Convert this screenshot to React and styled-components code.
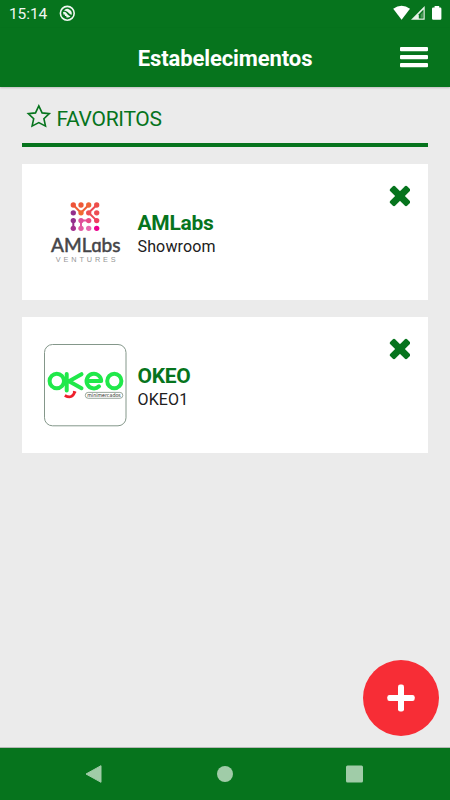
import React from "react";
import styled, { createGlobalStyle } from "styled-components";

const GREEN = "#06741d";

const GlobalStyle = createGlobalStyle`
  * { box-sizing: border-box; }
  body { margin: 0; font-family: Roboto, sans-serif; background: #ebebeb; overflow: hidden; }
`;
const Screen = styled.div`
  width: 450px;
  height: 800px;
  display: flex;
  flex-direction: column;
  position: relative;
  background: #ebebeb;
`;
const StatusBar = styled.div`
  height: 28px;
  flex: none;
  display: flex;
  align-items: center;
  padding: 0 8px 0 9px;
  background: ${GREEN};
  color: #f1f7f2;
`;
const Clock = styled.span`
  font-size: 15.5px;
  line-height: 28px;
  width: 50px;
  letter-spacing: -0.1px;
`;
const StatusIcons = styled.svg`
  margin-left: auto;
  display: block;
`;
const Icon = styled.svg`
  display: block;
  flex: none;
`;
const Header = styled.header`
  height: 59px;
  flex: none;
  display: grid;
  grid-template-columns: 50px 1fr 50px;
  align-items: center;
  background: ${GREEN};
  color: #fff;
  box-shadow: 0 1px 2px rgba(0, 0, 0, 0.2);
`;
const Title = styled.h1`
  grid-column: 2;
  margin: 2px 0 0;
  text-align: center;
  font-size: 22px;
  line-height: 28px;
  font-weight: 700;
  letter-spacing: -0.1px;
`;
const MenuButton = styled.button`
  border: 0;
  padding: 0 0 2px;
  background: none;
`;
const Content = styled.main`
  flex: 1;
  padding: 0 22px;
`;
const SectionHeading = styled.h2`
  margin: 0 0 16.5px;
  height: 60px;
  padding: 17px 0 0 4px;
  border-bottom: 4px solid ${GREEN};
  display: flex;
  gap: 4.5px;
  color: ${GREEN};
  font-size: 21px;
  line-height: 30px;
  font-weight: 400;
  letter-spacing: -0.3px;
`;
const Card = styled.article`
  height: 136.5px;
  margin-bottom: 16.5px;
  padding: 0 18px 0 22px;
  background: #fff;
  display: flex;
`;
const CardLogo = styled.div`
  width: 93.5px;
  padding-top: 27px;
`;
const CardText = styled.div`
  flex: 1;
  padding-top: 46px;
`;
const Name = styled.div`
  color: ${GREEN};
  font-size: 21px;
  line-height: 27px;
  font-weight: 700;
  letter-spacing: -0.3px;
`;
const Detail = styled.div`
  color: #202020;
  font-size: 16px;
  line-height: 20px;
  letter-spacing: 0.15px;
`;
const RemoveButton = styled.button`
  border: 0;
  padding: 21.5px 0 0;
  background: none;
  align-self: flex-start;
`;
const AddButton = styled.button`
  position: absolute;
  right: 11px;
  bottom: 64px;
  width: 76.5px;
  height: 76.5px;
  padding: 0;
  border: 0;
  border-radius: 50%;
  background: #f72d36;
  display: flex;
  align-items: center;
  justify-content: center;
`;
const NavBar = styled.nav`
  height: 53px;
  flex: none;
  border-top: 1px solid #b5b7b5;
  background: ${GREEN};
  display: grid;
  grid-template-columns: 17px 16px 18px;
  column-gap: 113px;
  align-items: center;
  padding-left: 85px;
`;
const HomeIcon = styled(Icon)`
  margin-left: 2px;
`;

const DOTS = [
  ["#ee5438", "#ee5a38", "#ee6638", "#ee4e4a"],
  ["#93308c", "#f06a30", "#ee4e54", "#ee4e54"],
  ["#93308c", "#de4f9a", "#e84a86", "#ee4060"],
  ["#a5308f", "#e35aa3", "#e868b0", "#ec008c"],
];
const dotX = [29.3, 37, 44.7, 52.7];
const dotY = [14, 21.8, 29.6, 37.3];

function AMLabsLogo() {
  return (
    <Icon width="84" height="84" viewBox="0 0 84 84">
      <g strokeWidth="2" fill="none">
        <path d="M29.3 14l7.7 7.8 7.7-7.8" stroke="#ef5f36" />
        <path d="M52.7 14l-8 7.8 8 7.8" stroke="#ee4a54" />
        <path d="M29.3 29.6v7.7" stroke="#9c308d" />
        <path d="M37 37.3v-7.7h7.7" stroke="#e355a0" />
      </g>
      {DOTS.map((row, r) =>
        row.map((color, c) => (
          <circle key={`${r}-${c}`} cx={dotX[c]} cy={dotY[r]} r="2.65" fill={color} />
        ))
      )}
      <text x="7" y="60.8" textLength="69.5" lengthAdjust="spacingAndGlyphs" fontFamily="Lato, sans-serif" fontWeight="400" fontSize="18.5" fill="#454548" stroke="#454548" strokeWidth="0.5">
        AML<tspan fontFamily="Open Sans, sans-serif" fontSize="17.5">ɑ</tspan>bs
      </text>
      <text x="11.7" y="71.4" textLength="60" fontFamily="Liberation Sans, sans-serif" fontSize="7.3" fill="#959595">VENTURES</text>
    </Icon>
  );
}

function OkeoLogo() {
  return (
    <Icon width="84" height="84" viewBox="0 0 84 84">
      <rect x="0.5" y="0.5" width="81.5" height="81.3" rx="8" fill="#fff" stroke="#84978a" />
      <g fill="none" stroke="#20e84a" strokeWidth="4" strokeLinecap="round" strokeLinejoin="round">
        <ellipse cx="12.8" cy="37" rx="7.2" ry="7.3" />
        <path d="M22.7 30v16.5M37.5 30.2L25 37.2l12.5 7" />
        <path d="M43 37h14.2a7.3 7.3 0 1 0-2.2 5.3" />
        <ellipse cx="70.3" cy="37" rx="7.1" ry="7.3" />
      </g>
      <path d="M20.8 51.4q7.6 4.2 10-3.8" fill="none" stroke="#ee202c" strokeWidth="2.8" />
      <path d="M29 47.4l3.2.9" stroke="#ee202c" strokeWidth="1.3" />
      <rect x="41.3" y="48.4" width="37.5" height="5.9" rx="2.9" fill="#fff" stroke="#7f9284" strokeWidth="0.8" />
      <text x="43.2" y="53.1" textLength="33.6" lengthAdjust="spacingAndGlyphs" fontFamily="DejaVu Sans, sans-serif" fontSize="5.2" fill="#1d2b20">minimercados</text>
    </Icon>
  );
}

function Establishment({ logo, name, detail }) {
  return (
    <Card>
      <CardLogo>{logo}</CardLogo>
      <CardText>
        <Name>{name}</Name>
        <Detail>{detail}</Detail>
      </CardText>
      <RemoveButton aria-label="Remover">
        <Icon width="21" height="22" viewBox="0 0 21 22">
          <g fill={GREEN} transform="translate(11 11) rotate(45)">
            <rect x="-12" y="-3.5" width="24" height="7" rx="1.9" />
            <rect x="-3.5" y="-12" width="7" height="24" rx="1.9" />
          </g>
        </Icon>
      </RemoveButton>
    </Card>
  );
}

export default function App() {
  return (
    <>
      <GlobalStyle />
      <Screen>
        <StatusBar>
          <Clock>15:14</Clock>
          <Icon width="18" height="18" viewBox="0 0 18 18">
            <circle cx="8.3" cy="8.3" r="6.9" fill="none" stroke="#f1f7f2" strokeWidth="1.6" />
            <path d="M5 5.5A4.4 4.4 0 0 1 12.4 10Q10 8.8 8.7 7.1 7 5.5 5 5.5Z" fill="#f1f7f2" />
            <path d="M4 7q2-.7 3.2.8 1.3 2.2 4.3 3.6A4.4 4.4 0 0 1 7.2 12.3l.2-1.4-1.5.1.1-1.4-1.4.1z" fill="#f1f7f2" />
          </Icon>
          <StatusIcons width="50" height="28" viewBox="0 0 50 28">
            <path d="M1.2 8.8q8.4-6 16.8 0L9.6 19.8Z" fill="#fff" />
            <path d="M32.7 6v13.8H19Z" fill="#e8f2e9" />
            <path d="M31.5 9.5v9h-4.7v-4.3Z" fill={GREEN} />
            <path d="M30.9 12v5.7h-2.2v-3.3Z" fill="#4d9859" />
            <path d="M42.6 6h4.6v1.5h1q1.2 0 1.2 1.2v9.8q0 1.3-1.2 1.3h-7q-1.2 0-1.2-1.3V8.7q0-1.2 1.2-1.2h1.4z" fill="#fff" />
          </StatusIcons>
        </StatusBar>
        <Header>
          <Title>Estabelecimentos</Title>
          <MenuButton aria-label="Menu">
            <Icon width="28" height="22" viewBox="0 0 28 22">
              <path d="M1 1h26q1 0 1 1v2.2q0 1-1 1H1q-1 0-1-1V2q0-1 1-1zM1 9h26q1 0 1 1v2.2q0 1-1 1H1q-1 0-1-1V10q0-1 1-1zM1 17h26q1 0 1 1v2.2q0 1-1 1H1q-1 0-1-1V18q0-1 1-1z" fill="#fff" />
            </Icon>
          </MenuButton>
        </Header>
        <Content>
          <SectionHeading>
            <Icon width="26" height="26" viewBox="0 0 26 26">
              <path d="M12.8 1.9l3.3 7 7.2.7-5.4 5.1 1.6 7.4-6.7-3.5-6.7 3.5 1.6-7.4-5.4-5.1 7.2-.7Z" fill="none" stroke={GREEN} strokeWidth="1.6" />
            </Icon>
            FAVORITOS
          </SectionHeading>
          <Establishment logo={<AMLabsLogo />} name="AMLabs" detail="Showroom" />
          <Establishment logo={<OkeoLogo />} name="OKEO" detail="OKEO1" />
        </Content>
        <AddButton aria-label="Adicionar">
          <Icon width="28" height="28" viewBox="0 0 28 28">
            <rect x="11" y="0.5" width="6" height="27" rx="2.2" fill="#fff" />
            <rect x="0.3" y="11" width="27.4" height="6" rx="2.2" fill="#fff" />
          </Icon>
        </AddButton>
        <NavBar>
          <Icon width="17" height="18" viewBox="0 0 17 18">
            <path d="M1 9L16 .7v16.6Z" fill="#a0cca8" stroke="#a0cca8" strokeLinejoin="round" />
          </Icon>
          <HomeIcon width="16" height="16" viewBox="0 0 16 16">
            <circle cx="8" cy="8" r="8" fill="#a0cca8" />
          </HomeIcon>
          <Icon width="20" height="18" viewBox="0 0 20 18">
            <rect x="2" y="0.5" width="17" height="17" rx="1.5" fill="#a0cca8" />
          </Icon>
        </NavBar>
      </Screen>
    </>
  );
}
